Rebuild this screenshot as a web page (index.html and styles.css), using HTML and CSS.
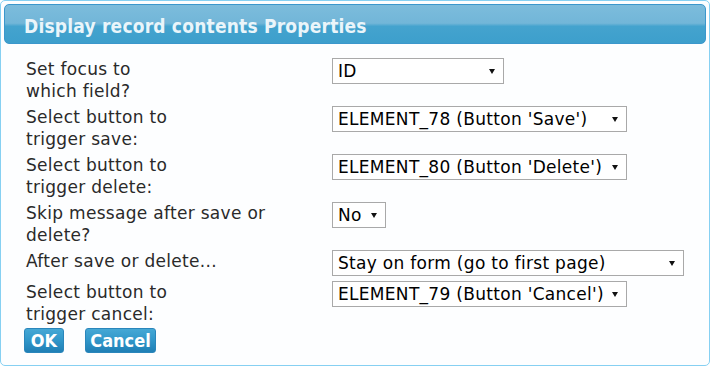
FILE: index.html
```html
<!DOCTYPE html>
<html lang="en">
<head>
  <meta charset="UTF-8" />
  <title>Display record contents Properties</title>
  <link rel="stylesheet" href="styles.css">
</head>
<body>
  <div class="dialog">
    <div class="titlebar">Display record contents Properties</div>

    <table class="props">
      <tr>
        <td class="label">Set focus to<br>which field?</td>
        <td><div class="select w-id"><span>ID</span><i class="arrow"></i></div></td>
      </tr>
      <tr>
        <td class="label">Select button to<br>trigger save:</td>
        <td><div class="select w-el"><span>ELEMENT_78 (Button 'Save')</span><i class="arrow"></i></div></td>
      </tr>
      <tr>
        <td class="label">Select button to<br>trigger delete:</td>
        <td><div class="select w-el"><span>ELEMENT_80 (Button 'Delete')</span><i class="arrow"></i></div></td>
      </tr>
      <tr>
        <td class="label">Skip message after save or<br>delete?</td>
        <td><div class="select w-no"><span>No</span><i class="arrow"></i></div></td>
      </tr>
      <tr class="single">
        <td class="label">After save or delete...</td>
        <td><div class="select w-stay"><span>Stay on form (go to first page)</span><i class="arrow"></i></div></td>
      </tr>
      <tr>
        <td class="label">Select button to<br>trigger cancel:</td>
        <td><div class="select w-el"><span>ELEMENT_79 (Button 'Cancel')</span><i class="arrow"></i></div></td>
      </tr>
    </table>

    <div class="buttons">
      <button class="btn btn-ok">OK</button>
      <button class="btn btn-cancel">Cancel</button>
    </div>
  </div>
</body>
</html>
```

FILE: styles.css
```css
html, body { margin: 0; padding: 0; background: #fff; }
body { font-family: "DejaVu Sans", Verdana, sans-serif; font-size: 17px; letter-spacing: 0.3px; color: #222; }

.dialog { box-sizing: border-box; width: 710px; height: 366px; border: 1px solid #86d0f2; border-radius: 5px; padding: 3px; background: #fdfeff; }
.titlebar { height: 40px; box-sizing: border-box; padding: 10px 0 0 19px; border: 1px solid #3b97cc; border-radius: 5px; color: #eaf5fa; font-size: 19px; font-weight: bold; font-stretch: condensed; letter-spacing: 0.2px; background: linear-gradient(to bottom, #7cbcdc 0%, #72b6d8 48%, #44a3ce 56%, #3d9fcc 100%); }

.props { border-collapse: collapse; margin: 12px 0 0 18px; }
.props td { padding: 2px 3px 2px 4px; vertical-align: top; }
.props td.label { width: 299px; line-height: 22px; color: #2a2a2a; }
.props tr.single td { padding-bottom: 3px; }

.select { box-sizing: border-box; height: 26px; display: flex; align-items: center; justify-content: space-between; padding: 0 8px 0 5px; border: 1px solid #a9a9a9; background: #fff; color: #000; white-space: nowrap; overflow: hidden; }
.w-id { width: 172px; }
.w-el { width: 295px; }
.w-no { width: 54px; }
.w-stay { width: 352px; }
.arrow { flex: none; width: 0; height: 0; border-left: 3px solid transparent; border-right: 3px solid transparent; border-top: 5px solid #111; }

.buttons { display: flex; gap: 21px; margin: 1px 0 0 20px; }
.btn { height: 25px; padding: 0; border: 1px solid #2a86bb; border-radius: 3px; color: #fff; font-family: "DejaVu Sans", Verdana, sans-serif; font-size: 18px; font-weight: bold; font-stretch: condensed; line-height: 20px; background: linear-gradient(to bottom, #45a8d5 0%, #3096c9 50%, #1f7fb5 100%); }
.btn-ok { width: 40px; }
.btn-cancel { width: 71px; }
```
